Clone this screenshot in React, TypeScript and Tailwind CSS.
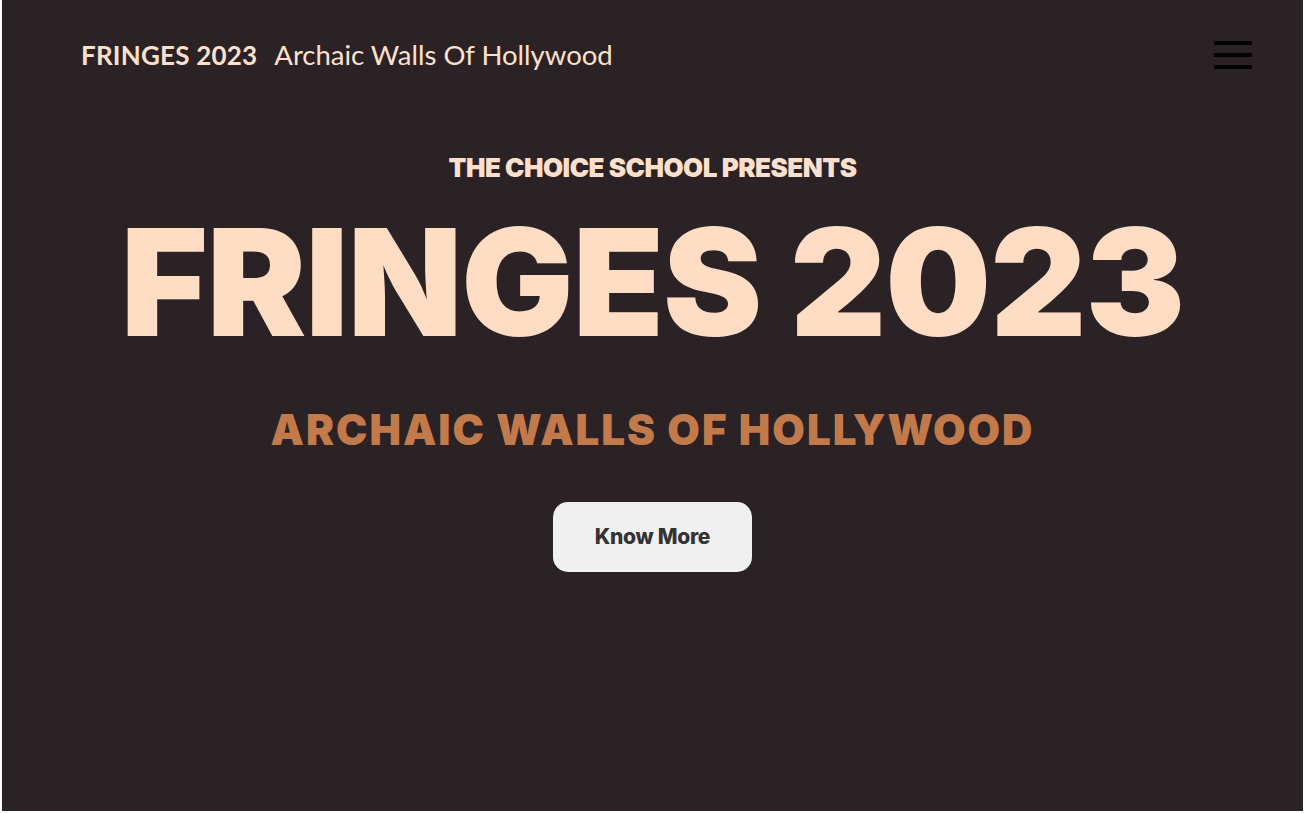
export default function App() {
  return (
    <div className="w-[1305px] h-[813px] bg-white pl-[2px] pb-[2px]">
      <div className="w-[1301px] h-[811px] bg-[#2b2226] flex flex-col">
        <header className="flex items-center justify-between pl-[79px] pr-[51px] h-[110px]">
          <div className="flex items-baseline gap-[17px] text-[#fde0cc]" style={{ fontFamily: '"Lato", "Liberation Sans", sans-serif' }}>
            <span className="text-[26px] font-bold tracking-[0.2px]">FRINGES 2023</span>
            <span className="text-[27.5px] font-normal">Archaic Walls Of Hollywood</span>
          </div>
          <button className="flex flex-col gap-[8px] w-[38px]">
            <span className="block h-[4px] w-full bg-black" />
            <span className="block h-[4px] w-full bg-black" />
            <span className="block h-[4px] w-full bg-black" />
          </button>
        </header>
        <main className="flex flex-col items-center" style={{ fontFamily: '"Inter", "Liberation Sans", sans-serif' }}>
          <p className="mt-[42px] text-[26px] leading-[32px] font-black text-[#fde0cc] tracking-[-0.5px]">THE CHOICE SCHOOL PRESENTS</p>
          <h1 className="mt-[18px] text-[149px] leading-[160px] font-black text-[#ffdcc4] tracking-[-1px]">FRINGES 2023</h1>
          <h2 className="mt-[42px] text-[42px] leading-[52px] font-black text-[#c27a4a] tracking-[2px]">ARCHAIC WALLS OF HOLLYWOOD</h2>
          <button className="mt-[46px] w-[199px] h-[70px] rounded-[15px] bg-[#f0f0f0] text-[#333333] text-[21px] font-extrabold tracking-[-0.3px]">Know More</button>
        </main>
      </div>
    </div>
  );
}
